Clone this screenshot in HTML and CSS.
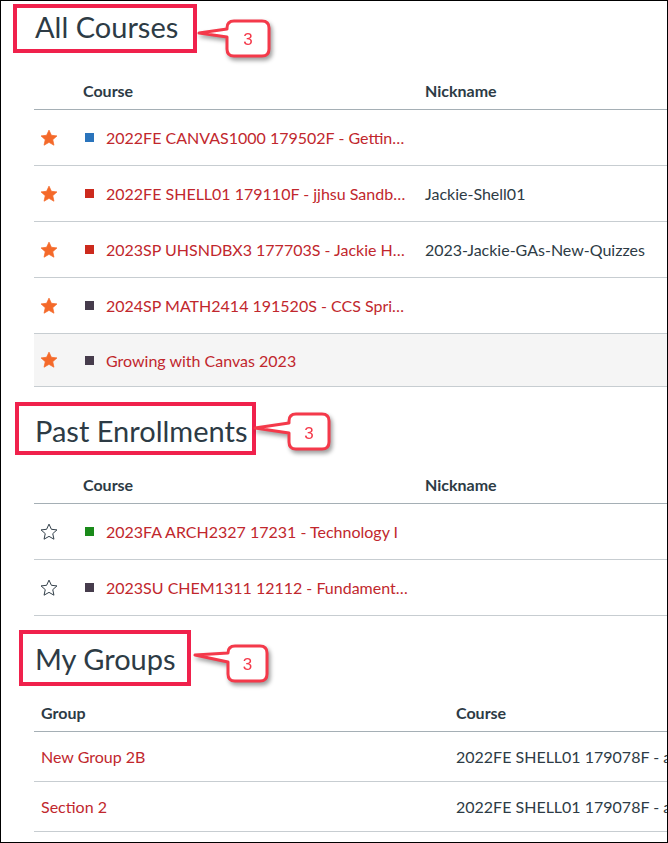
FILE: index.html
```html
<!DOCTYPE html>
<html lang="en">
<head>
<meta charset="utf-8">
<title>All Courses</title>
<link rel="stylesheet" href="styles.css">
</head>
<body>
<div class="frame">

  <section class="sec s1">
    <h2 class="title">All Courses
      <span class="mark m1"></span>
      <svg class="callout c1" width="80" height="50" viewBox="0 0 80 50">
        <path d="M38,5 H66 Q73,5 73,12 V33 Q73,40 66,40 H38 Q31,40 31,33 V21 L3,17 L31,13 V12 Q31,5 38,5 Z"/>
        <text x="52" y="29">3</text>
      </svg>
    </h2>
    <div class="thead cgrid">
      <span></span>
      <span>Course</span>
      <span>Nickname</span>
    </div>
    <div class="row cgrid">
      <span class="starcell"><svg class="star full" viewBox="0 0 24 24"><polygon points="12,1.5 15.2,8.4 22.6,9.2 17,14.2 18.6,21.6 12,17.8 5.4,21.6 7,14.2 1.4,9.2 8.8,8.4"/></svg></span>
      <span class="ccell"><span class="sq blue"></span><a class="link">2022FE CANVAS1000 179502F - Gettin…</a></span>
      <span class="nick"></span>
    </div>
    <div class="row cgrid">
      <span class="starcell"><svg class="star full" viewBox="0 0 24 24"><polygon points="12,1.5 15.2,8.4 22.6,9.2 17,14.2 18.6,21.6 12,17.8 5.4,21.6 7,14.2 1.4,9.2 8.8,8.4"/></svg></span>
      <span class="ccell"><span class="sq red"></span><a class="link">2022FE SHELL01 179110F - jjhsu Sandb…</a></span>
      <span class="nick">Jackie-Shell01</span>
    </div>
    <div class="row cgrid">
      <span class="starcell"><svg class="star full" viewBox="0 0 24 24"><polygon points="12,1.5 15.2,8.4 22.6,9.2 17,14.2 18.6,21.6 12,17.8 5.4,21.6 7,14.2 1.4,9.2 8.8,8.4"/></svg></span>
      <span class="ccell"><span class="sq red"></span><a class="link">2023SP UHSNDBX3 177703S - Jackie H…</a></span>
      <span class="nick">2023-Jackie-GAs-New-Quizzes</span>
    </div>
    <div class="row cgrid">
      <span class="starcell"><svg class="star full" viewBox="0 0 24 24"><polygon points="12,1.5 15.2,8.4 22.6,9.2 17,14.2 18.6,21.6 12,17.8 5.4,21.6 7,14.2 1.4,9.2 8.8,8.4"/></svg></span>
      <span class="ccell"><span class="sq dark"></span><a class="link">2024SP MATH2414 191520S - CCS Spri…</a></span>
      <span class="nick"></span>
    </div>
    <div class="row cgrid hover last">
      <span class="starcell"><svg class="star full" viewBox="0 0 24 24"><polygon points="12,1.5 15.2,8.4 22.6,9.2 17,14.2 18.6,21.6 12,17.8 5.4,21.6 7,14.2 1.4,9.2 8.8,8.4"/></svg></span>
      <span class="ccell"><span class="sq dark"></span><a class="link">Growing with Canvas 2023</a></span>
      <span class="nick"></span>
    </div>
  </section>

  <section class="sec s2">
    <h2 class="title">Past Enrollments
      <span class="mark m2"></span>
      <svg class="callout c2" width="82" height="50" viewBox="0 0 82 50">
        <path d="M44,5 H70 Q77,5 77,12 V33 Q77,40 70,40 H44 Q37,40 37,33 V24 L3,19 L37,14 V12 Q37,5 44,5 Z"/>
        <text x="57" y="30">3</text>
      </svg>
    </h2>
    <div class="thead cgrid">
      <span></span>
      <span>Course</span>
      <span>Nickname</span>
    </div>
    <div class="row cgrid">
      <span class="starcell"><svg class="star empty" viewBox="0 0 24 24"><polygon points="12,1.5 15.2,8.4 22.6,9.2 17,14.2 18.6,21.6 12,17.8 5.4,21.6 7,14.2 1.4,9.2 8.8,8.4"/></svg></span>
      <span class="ccell"><span class="sq green"></span><a class="link">2023FA ARCH2327 17231 - Technology I</a></span>
      <span class="nick"></span>
    </div>
    <div class="row cgrid">
      <span class="starcell"><svg class="star empty" viewBox="0 0 24 24"><polygon points="12,1.5 15.2,8.4 22.6,9.2 17,14.2 18.6,21.6 12,17.8 5.4,21.6 7,14.2 1.4,9.2 8.8,8.4"/></svg></span>
      <span class="ccell"><span class="sq dark"></span><a class="link">2023SU CHEM1311 12112 - Fundament…</a></span>
      <span class="nick"></span>
    </div>
  </section>

  <section class="sec s3">
    <h2 class="title">My Groups
      <span class="mark m3"></span>
      <svg class="callout c3" width="80" height="50" viewBox="0 0 80 50">
        <path d="M43,5 H68 Q75,5 75,12 V33 Q75,40 68,40 H43 Q36,40 36,33 V21 L3,14 L36,12 Q36,5 43,5 Z"/>
        <text x="55.5" y="29">3</text>
      </svg>
    </h2>
    <div class="thead ggrid">
      <span class="gpad">Group</span>
      <span>Course</span>
    </div>
    <div class="row ggrid grow">
      <span class="gpad"><a class="link">New Group 2B</a></span>
      <span class="nick">2022FE SHELL01 179078F - a</span>
    </div>
    <div class="row ggrid grow">
      <span class="gpad"><a class="link">Section 2</a></span>
      <span class="nick">2022FE SHELL01 179078F - a</span>
    </div>
  </section>

</div>
</body>
</html>
```

FILE: styles.css
```css
html, body {
  margin: 0;
  padding: 0;
  background: #ffffff;
}

body {
  font-family: Lato, "Noto Sans", "Liberation Sans", sans-serif;
  color: #2d3b45;
}

.frame {
  width: 668px;
  height: 843px;
  box-sizing: border-box;
  border: 1px solid #000000;
  overflow: hidden;
  position: relative;
  background: #ffffff;
}

.title {
  position: relative;
  margin: 0;
  padding-left: 34px;
  height: 36px;
  font-size: 29px;
  font-weight: 400;
  line-height: 36px;
  color: #2d3b45;
}

.s1 .title { margin-top: 8px; }
.s2 .title { margin-top: 26px; }
.s3 .title { margin-top: 25px; }

.mark {
  position: absolute;
  box-sizing: border-box;
  border: 4px solid #f0214c;
}

.m1 { left: 12px; top: -5px; width: 184px; height: 49px; }
.m2 { left: 14px; top: -11px; width: 241px; height: 53px; }
.m3 { left: 18px; top: -11px; width: 172px; height: 56px; }

.callout {
  position: absolute;
  overflow: visible;
  filter: drop-shadow(2px 3px 2px rgba(0, 0, 0, 0.38));
}

.callout path {
  fill: #ffffff;
  stroke: #f4394a;
  stroke-width: 3;
  stroke-linejoin: round;
}

.callout text {
  font-family: "Liberation Sans", Arial, sans-serif;
  font-size: 17px;
  fill: #f4394a;
  text-anchor: middle;
}

.c1 { left: 195px; top: 7px; }
.c2 { left: 251px; top: -4px; }
.c3 { left: 191px; top: 0px; }

.thead,
.row {
  display: grid;
  align-items: center;
  box-sizing: border-box;
  margin-left: 33px;
  width: 720px;
  white-space: nowrap;
}

.thead {
  height: 38px;
  border-bottom: 1px solid #a5afb5;
  font-size: 16px;
  font-weight: 700;
}

.s1 .thead { margin-top: 27px; }
.s2 .thead,
.s3 .thead { margin-top: 17px; }

.row {
  height: 56px;
  border-bottom: 1px solid #c7cdd1;
  font-size: 16px;
}

.row.last { height: 53px; }

.row.grow { height: 50px; }

.row.hover { background: #f5f5f5; }

.cgrid { grid-template-columns: 49px 342px 1fr; }
.ggrid { grid-template-columns: 422px 1fr; }

.gpad { padding-left: 7px; }

.starcell {
  display: flex;
  align-items: center;
  padding-left: 6px;
}

.star {
  width: 18px;
  height: 18px;
  display: block;
}

.star.full polygon {
  fill: #f4692a;
  stroke: #f4692a;
  stroke-width: 1;
  stroke-linejoin: round;
}

.star.empty polygon {
  fill: none;
  stroke: #2d3b45;
  stroke-width: 1.3;
  stroke-linejoin: round;
}

.ccell {
  display: flex;
  align-items: center;
}

.sq {
  width: 9px;
  height: 9px;
  margin: 0 12px 0 2px;
  flex: none;
}

.sq.blue { background: #2a74bc; }
.sq.red { background: #cc2a1d; }
.sq.dark { background: #463c4c; }
.sq.green { background: #1a8a1a; }

.link {
  color: #c1272d;
  text-decoration: none;
}

.nick {
  color: #2d3b45;
}
```
